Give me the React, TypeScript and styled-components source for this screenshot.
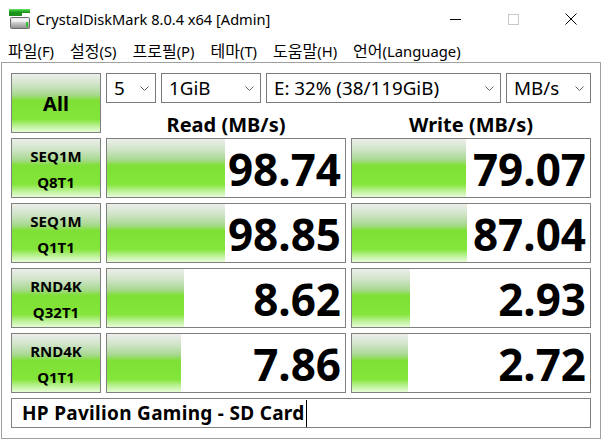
import React from "react";
import styled, { createGlobalStyle } from "styled-components";

const GlobalStyle = createGlobalStyle`
  html, body {
    margin: 0;
    padding: 0;
    background: #ffffff;
  }
  body {
    font-family: "Noto Sans", "Noto Sans CJK KR", sans-serif;
    color: #000;
  }
`;

interface IResult {
  name: string;
  sub: string;
  read: string;
  write: string;
  readBar: number;
  writeBar: number;
}

const results: IResult[] = [
  { name: "SEQ1M", sub: "Q8T1", read: "98.74", write: "79.07", readBar: 118, writeBar: 114 },
  { name: "SEQ1M", sub: "Q1T1", read: "98.85", write: "87.04", readBar: 118, writeBar: 115 },
  { name: "RND4K", sub: "Q32T1", read: "8.62", write: "2.93", readBar: 77, writeBar: 58 },
  { name: "RND4K", sub: "Q1T1", read: "7.86", write: "2.72", readBar: 74, writeBar: 56 },
];

// korean label, accelerator part
const menus: [string, string][] = [
  ["파일", "(F)"],
  ["설정", "(S)"],
  ["프로필", "(P)"],
  ["테마", "(T)"],
  ["도움말", "(H)"],
  ["언어", "(Language)"],
];

const combos = [
  { value: "5", width: 50 },
  { value: "1GiB", width: 100 },
  { value: "E: 32% (38/119GiB)", width: 235 },
  { value: "MB/s", width: 85 },
];

const App: React.FC = () => {
  return (
    <>
      <GlobalStyle />
      <Window>
        <TitleBar>
          <AppIcon />
          <Title>CrystalDiskMark 8.0.4 x64 [Admin]</Title>
          <CaptionGroup>
            <CaptionButton>
              <svg width="11" height="11" viewBox="0 0 11 11">
                <line x1="0" y1="5.5" x2="11" y2="5.5" stroke="#000" strokeWidth="1" />
              </svg>
            </CaptionButton>
            <CaptionButton>
              <svg width="11" height="11" viewBox="0 0 11 11">
                <rect x="0.5" y="0.5" width="10" height="10" fill="none" stroke="#c8c8c8" strokeWidth="1" />
              </svg>
            </CaptionButton>
            <CaptionButton>
              <svg width="12" height="12" viewBox="0 0 12 12">
                <path d="M0.5 0.5 L11.5 11.5 M11.5 0.5 L0.5 11.5" stroke="#000" strokeWidth="1" />
              </svg>
            </CaptionButton>
          </CaptionGroup>
        </TitleBar>
        <MenuBar>
          {menus.map(([ko, key]) => (
            <MenuItem key={ko}>
              <MenuKo>{ko}</MenuKo>
              {key}
            </MenuItem>
          ))}
        </MenuBar>
        <Client>
          <Board>
            <AllButton>All</AllButton>
            <ComboRow>
              {combos.map((c) => (
                <Combo key={c.value} $width={c.width}>
                  <span>{c.value}</span>
                  <svg width="9" height="5" viewBox="0 0 9 5">
                    <polyline points="0.5,0.5 4.5,4.5 8.5,0.5" fill="none" stroke="#606060" strokeWidth="1" />
                  </svg>
                </Combo>
              ))}
            </ComboRow>
            <Heading>Read (MB/s)</Heading>
            <Heading>Write (MB/s)</Heading>
            {results.map((r, i) => (
              <React.Fragment key={i}>
                <TestButton>
                  <span>{r.name}</span>
                  <span>{r.sub}</span>
                </TestButton>
                <Meter style={{ backgroundSize: `${r.readBar}px 100%` }}>{r.read}</Meter>
                <Meter style={{ backgroundSize: `${r.writeBar}px 100%` }}>{r.write}</Meter>
              </React.Fragment>
            ))}
            <Comment>
              HP Pavilion Gaming - SD Card
              <Caret />
            </Comment>
          </Board>
        </Client>
      </Window>
    </>
  );
};

const AppIcon: React.FC = () => {
  return (
    <IconBox>
      <svg width="22" height="21" viewBox="0 0 22 21">
        <defs>
          <linearGradient id="slab" x1="0" y1="0" x2="0" y2="1">
            <stop offset="0" stopColor="#6fe06a" />
            <stop offset="0.5" stopColor="#2db52b" />
            <stop offset="1" stopColor="#178a17" />
          </linearGradient>
          <linearGradient id="body" x1="0" y1="0" x2="0" y2="1">
            <stop offset="0" stopColor="#f2f2f2" />
            <stop offset="0.5" stopColor="#c9c9c9" />
            <stop offset="1" stopColor="#8e8e8e" />
          </linearGradient>
        </defs>
        <rect x="0" y="0" width="21" height="4" fill="url(#slab)" />
        <rect x="0" y="4" width="13" height="3" fill="#1c8f1c" />
        <rect x="1.5" y="8.5" width="19" height="11" rx="1" fill="url(#body)" stroke="#6c6c6c" strokeWidth="1" />
        <rect x="3" y="10" width="16" height="3" fill="#ffffff" opacity="0.6" />
        <rect x="17" y="13" width="2" height="5" fill="#2fc42f" />
      </svg>
    </IconBox>
  );
};

const Window = styled.div`
  width: 602px;
  height: 439px;
  display: flex;
  flex-direction: column;
  background: #ffffff;
  overflow: hidden;
`;

const TitleBar = styled.div`
  height: 38px;
  display: flex;
  align-items: center;
  flex-shrink: 0;
`;

const IconBox = styled.div`
  width: 22px;
  height: 21px;
  margin-left: 9px;
  margin-top: 1px;
  display: flex;
`;

const Title = styled.div`
  margin-left: 5px;
  font-size: 14.6px;
  line-height: 1;
  color: #000;
  flex: 1;
`;

const CaptionGroup = styled.div`
  display: flex;
  height: 38px;
  margin-right: 2px;
`;

const CaptionButton = styled.div`
  width: 58px;
  height: 38px;
  display: flex;
  align-items: center;
  justify-content: center;
`;

const MenuBar = styled.div`
  box-sizing: border-box;
  height: 24px;
  display: flex;
  align-items: center;
  padding: 2px 0 0 8px;
  gap: 16px;
  flex-shrink: 0;
`;

const MenuItem = styled.div`
  font-size: 14.8px;
  line-height: 1;
  color: #000;
  white-space: nowrap;
`;

const MenuKo = styled.span`
  font-size: 16px;
`;

const Client = styled.div`
  flex: 1;
  margin: 0 1px;
  border: 1px solid #a0a0a0;
  padding: 10px 9px;
`;

const Board = styled.div`
  display: grid;
  grid-template-columns: 90px 240px 240px;
  grid-template-rows: 30px 25px repeat(4, 60px) 30px;
  column-gap: 5px;
  row-gap: 5px;
`;

const greenFill = `linear-gradient(
  to bottom,
  #eceeea 0%,
  #d0e4c8 18%,
  #a8d890 36%,
  #7ee034 46%,
  #84e53a 78%,
  #c2f3a0 91%,
  #e6fcd6 100%
)`;

const AllButton = styled.div`
  grid-row: 1 / span 2;
  border: 1px solid #808080;
  background: ${greenFill};
  display: flex;
  align-items: center;
  justify-content: center;
  font-size: 20px;
  font-weight: 700;
`;

const ComboRow = styled.div`
  grid-column: 2 / span 2;
  display: flex;
  gap: 5px;
`;

const Combo = styled.div<{ $width: number }>`
  width: ${(p) => p.$width}px;
  box-sizing: border-box;
  border: 1px solid #7a7a7a;
  background: #fff;
  display: flex;
  align-items: center;
  justify-content: space-between;
  padding: 1px 6px 0 7px;
  font-size: 18.8px;
  line-height: 1;
  white-space: nowrap;

  svg {
    flex-shrink: 0;
  }
`;

const Heading = styled.div`
  display: flex;
  align-items: flex-end;
  justify-content: center;
  font-size: 20px;
  line-height: 16px;
  font-weight: 700;
`;

const TestButton = styled.div`
  border: 1px solid #808080;
  background: ${greenFill};
  display: flex;
  flex-direction: column;
  align-items: center;
  justify-content: center;
  font-size: 15px;
  line-height: 26px;
  font-weight: 700;
  padding-top: 1px;
`;

const Meter = styled.div`
  border: 1px solid #808080;
  background-color: #fff;
  background-image: ${greenFill};
  background-repeat: no-repeat;
  display: flex;
  align-items: center;
  justify-content: flex-end;
  padding: 2px 4px 0 0;
  font-size: 44px;
  line-height: 1;
  font-weight: 700;
`;

const Comment = styled.div`
  grid-column: 1 / -1;
  border: 1px solid #808080;
  display: flex;
  align-items: center;
  padding-left: 10px;
  font-size: 19px;
  letter-spacing: 0.3px;
  font-weight: 700;
  white-space: pre;
`;

const Caret = styled.span`
  display: inline-block;
  width: 1px;
  height: 27px;
  background: #000;
  margin-left: 1px;
`;

export default App;
